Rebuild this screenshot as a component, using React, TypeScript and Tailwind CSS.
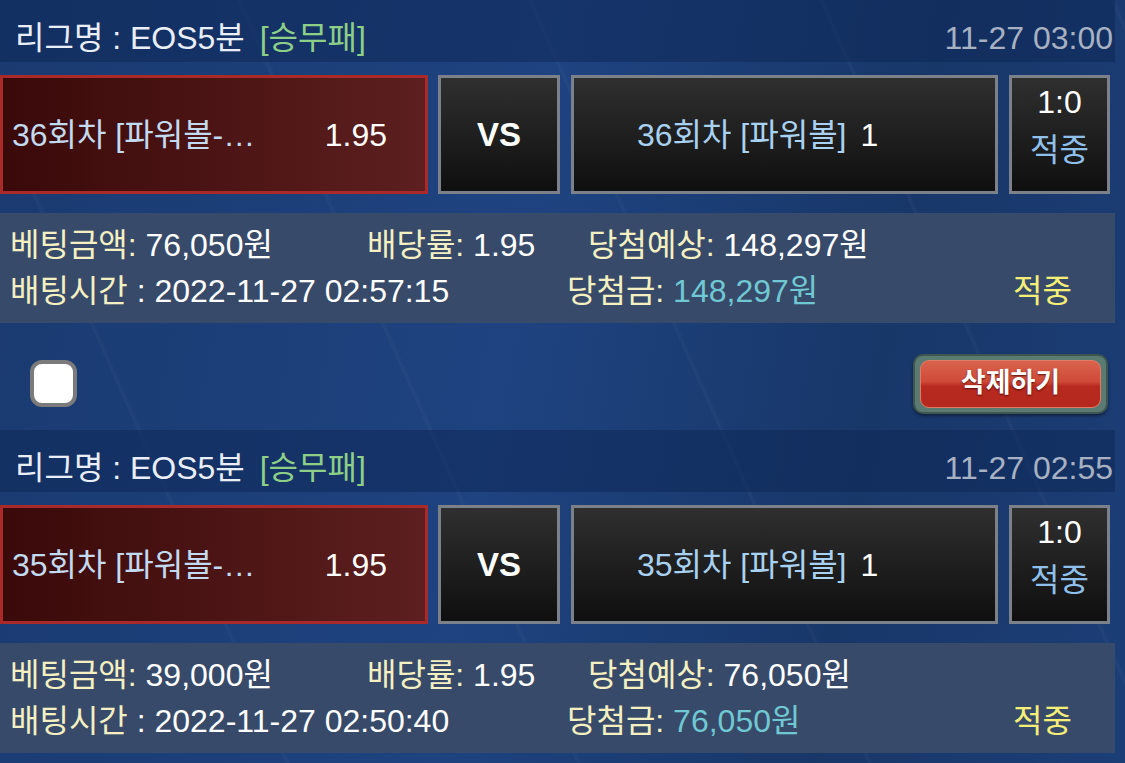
type Bet = {
  time: string
  home: string
  away: string
  amount: string
  rate: string
  expect: string
  betTime: string
  win: string
}

const bets: Bet[] = [
  {
    time: '11-27 03:00',
    home: '36회차 [파워볼-…',
    away: '36회차 [파워볼]',
    amount: '76,050원',
    rate: '1.95',
    expect: '148,297원',
    betTime: '2022-11-27 02:57:15',
    win: '148,297원',
  },
  {
    time: '11-27 02:55',
    home: '35회차 [파워볼-…',
    away: '35회차 [파워볼]',
    amount: '39,000원',
    rate: '1.95',
    expect: '76,050원',
    betTime: '2022-11-27 02:50:40',
    win: '76,050원',
  },
]

function BetCard({ bet }: { bet: Bet }) {
  return (
    <div className="w-[1115px]">
      {/* league header */}
      <div className="flex h-[62px] items-center justify-between bg-[#0f2858]/55 pl-[15px] pr-[2px] pt-[14px] leading-[40px]">
        <div className="text-[#e9eef7]">
          리그명 : EOS5분 <span className="ml-[6px] text-[#8dcf86]">[승무패]</span>
        </div>
        <div className="text-[#a7b1c2]">{bet.time}</div>
      </div>

      {/* match row */}
      <div className="mt-[13px] flex h-[119px]">
        <div className="flex w-[428px] items-center justify-between border-[3px] border-[#a92a28] bg-[linear-gradient(90deg,#3a0909,#5d1f1f)] pl-[9px] pr-[38px]">
          <span className="text-[#c3dbf1]">{bet.home}</span>
          <span className="text-white">{bet.rate}</span>
        </div>
        <div className="ml-[10px] flex w-[122px] items-center justify-center border-[3px] border-[#7c8089] bg-[linear-gradient(180deg,#2f2f2f,#0f0f0f)] text-[33px] font-bold text-white">
          VS
        </div>
        <div className="ml-[11px] flex w-[427px] items-center border-[3px] border-[#7c8089] bg-[linear-gradient(180deg,#2f2f2f,#0f0f0f)] pl-[63px]">
          <span className="text-[#a9d1f1]">{bet.away}</span>
          <span className="ml-[14px] text-white">1</span>
        </div>
        <div className="ml-[11px] flex w-[101px] flex-col items-center border-[3px] border-[#7c8089] bg-[linear-gradient(180deg,#2f2f2f,#0f0f0f)] leading-[48px]">
          <span className="text-white">1:0</span>
          <span className="text-[#8fc0ec]">적중</span>
        </div>
      </div>

      {/* bet info */}
      <div className="mt-[19px] h-[110px] bg-[#384a69] px-[10px] py-[9px] leading-[46px]">
        <div className="flex">
          <div className="w-[357px]">
            <span className="text-[#f4f0c2]">베팅금액:</span> <span className="text-white">{bet.amount}</span>
          </div>
          <div className="w-[221px]">
            <span className="text-[#f4f0c2]">배당률:</span> <span className="text-white">{bet.rate}</span>
          </div>
          <div>
            <span className="text-[#f4f0c2]">당첨예상:</span> <span className="text-white">{bet.expect}</span>
          </div>
        </div>
        <div className="flex">
          <div className="w-[557px]">
            <span className="text-[#f4f0c2]">배팅시간</span> <span className="text-white">: {bet.betTime}</span>
          </div>
          <div className="w-[446px]">
            <span className="text-[#f4f0c2]">당첨금:</span> <span className="text-[#6fc8d2]">{bet.win}</span>
          </div>
          <div className="text-[#f5ef78]">적중</div>
        </div>
      </div>

      {/* actions */}
      <div className="flex h-[107px] items-center justify-between pt-[14px]">
        <div className="ml-[30px] h-[47px] w-[47px] rounded-[12px] border-[4px] border-[#7b7b7b] bg-white" />
        <div className="mr-[7px] flex h-[60px] w-[195px] items-center justify-center rounded-[10px] border-[2px] border-[#3d5650] bg-[#5b7a72] px-[5px] py-[4px] shadow-[0_2px_3px_rgba(0,0,0,0.4)]">
          <div className="flex h-full w-full items-center justify-center rounded-[9px] border border-[#e27a66] bg-[linear-gradient(180deg,#d9634d_0%,#cf4a38_45%,#b82a1f_55%,#b5281d_100%)] text-[27px] font-bold text-white [text-shadow:0_1px_2px_rgba(60,0,0,0.8)]">
            삭제하기
          </div>
        </div>
      </div>
    </div>
  )
}

export default function App() {
  return (
    <div className="h-[763px] w-[1125px] overflow-hidden bg-[repeating-linear-gradient(66deg,transparent_0px,transparent_260px,rgba(255,255,255,0.03)_262px,transparent_266px),linear-gradient(100deg,#1a3a70_0%,#1e4380_45%,#183769_75%,#1c3e77_100%)] font-['Liberation_Sans','Noto_Sans_CJK_KR',sans-serif] text-[32px]">
      {bets.map((bet, i) => (
        <BetCard key={i} bet={bet} />
      ))}
    </div>
  )
}
